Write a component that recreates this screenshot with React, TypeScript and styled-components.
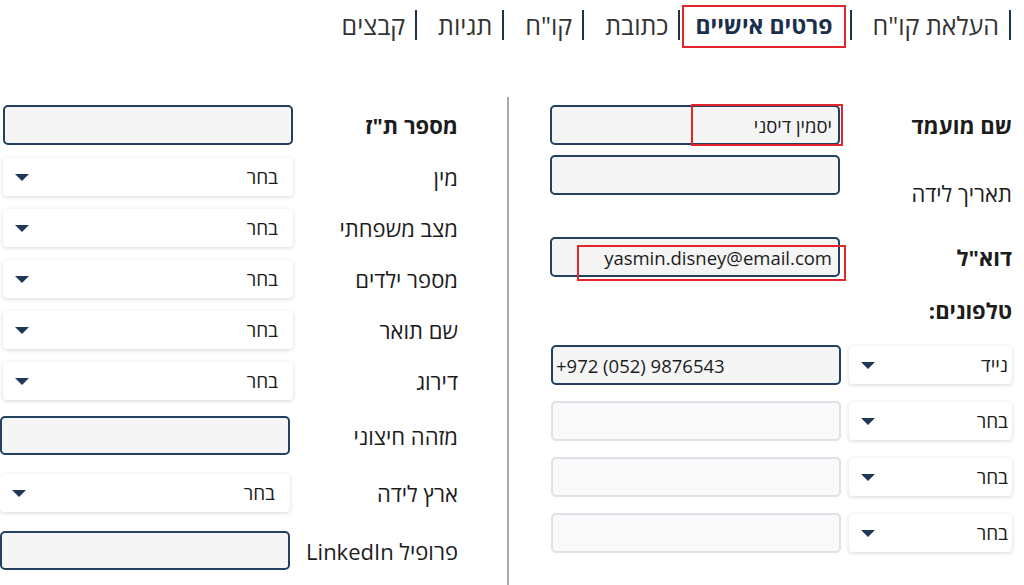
import React from "react";
import styled, { createGlobalStyle, css } from "styled-components";

const GlobalStyle = createGlobalStyle`
  html, body {
    margin: 0;
    padding: 0;
    background: #ffffff;
  }
  body {
    font-family: "Open Sans", "Noto Sans", "DejaVu Sans", sans-serif;
    color: #1c1c1c;
  }
  * {
    box-sizing: border-box;
  }
`;

const Page = styled.div`
  width: 1024px;
  height: 585px;
  overflow: hidden;
  direction: rtl;
`;

const Tabs = styled.nav`
  display: flex;
  align-items: flex-start;
  height: 97px;
  padding: 10px 13px 0 0;
`;

const Tab = styled.div<{ $active?: boolean }>`
  position: relative;
  border-right: 2px solid #1d3350;
  height: 30px;
  line-height: 30px;
  font-size: 25px;
  white-space: nowrap;
  color: #333333;
  padding-right: 10px;
  margin-left: 21px;

  ${({ $active }) =>
    $active &&
    css`
      padding-right: 17px;
      margin-left: 15px;
      font-size: 23px;
      font-weight: 700;
      color: #1b2f4d;
    `}
`;

const TabLabel = styled.span`
  position: relative;
  display: inline-block;
`;

const Mark = styled.span<{ $t: number; $r: number; $b: number; $l: number }>`
  position: absolute;
  top: ${({ $t }) => $t}px;
  right: ${({ $r }) => $r}px;
  bottom: ${({ $b }) => $b}px;
  left: ${({ $l }) => $l}px;
  border: 2.5px solid #e3262b;
  pointer-events: none;
`;

const Columns = styled.div`
  display: grid;
  grid-template-columns: 517px 507px;
  height: 488px;
`;

const Column = styled.section<{ $pr: number }>`
  display: flex;
  flex-direction: column;
  padding: 8px ${({ $pr }) => $pr}px 0 0;
`;

const RightColumn = styled(Column)`
  border-left: 2px solid #a9a9a9;
`;

const Row = styled.div<{ $mt?: number; $gap?: number; $top?: boolean }>`
  display: flex;
  align-items: ${({ $top }) => ($top ? "flex-start" : "center")};
  gap: ${({ $gap }) => $gap ?? 10}px;
  margin-top: ${({ $mt }) => $mt ?? 0}px;
`;

const Label = styled.div<{ $w: number; $bold?: boolean; $drop?: number }>`
  flex: 0 0 ${({ $w }) => $w}px;
  font-size: 22px;
  line-height: 28px;
  white-space: nowrap;
  font-weight: ${({ $bold }) => ($bold ? 700 : 400)};
  color: #1c1c1c;
  margin-top: ${({ $drop }) => $drop ?? 0}px;
`;

const Heading = styled.div<{ $mt: number }>`
  font-size: 22px;
  line-height: 28px;
  font-weight: 700;
  margin-top: ${({ $mt }) => $mt}px;
`;

const FieldWrap = styled.div`
  position: relative;
  flex: 0 0 auto;
`;

const TextInput = styled.input<{ $muted?: boolean; $ltr?: boolean; $h?: number; $shift?: boolean }>`
  display: block;
  width: 290px;
  height: ${({ $h }) => $h ?? 40}px;
  margin-right: ${({ $shift }) => ($shift ? 3 : 0)}px;
  border-radius: 5px;
  border: 2px solid ${({ $muted }) => ($muted ? "#dde2e8" : "#22405f")};
  background: ${({ $muted }) => ($muted ? "#fafafa" : "#f5f5f5")};
  font-family: inherit;
  font-size: 18.5px;
  color: #1c1c1c;
  padding: 0 ${({ $ltr }) => ($ltr ? "3px" : "6px")};
  outline: none;
  direction: ${({ $ltr }) => ($ltr ? "ltr" : "rtl")};
  text-align: ${({ $ltr }) => ($ltr ? "left" : "right")};
`;

const SelectBox = styled.div<{ $w: number; $pr: number; $shift?: boolean }>`
  display: flex;
  align-items: center;
  justify-content: space-between;
  width: ${({ $w }) => $w}px;
  height: 38px;
  margin-right: ${({ $shift }) => ($shift ? 3 : 0)}px;
  padding: 0 ${({ $pr }) => $pr}px 0 12px;
  background: #ffffff;
  border-radius: 4px;
  box-shadow: 0 1px 4px rgba(0, 0, 0, 0.16);
  font-size: 19px;
  color: #1c1c1c;
  flex: 0 0 auto;
`;

const Caret = styled.span`
  width: 0;
  height: 0;
  border-left: 7px solid transparent;
  border-right: 7px solid transparent;
  border-top: 7px solid #1f3858;
`;

interface SelectProps {
  value: string;
  w?: number;
  pr?: number;
  shift?: boolean;
}

const Select = ({ value, w = 290, pr = 15, shift }: SelectProps) => (
  <SelectBox $w={w} $pr={pr} $shift={shift}>
    <span>{value}</span>
    <Caret />
  </SelectBox>
);

const tabs = ['העלאת קו"ח', "פרטים אישיים", "כתובת", 'קו"ח', "תגיות", "קבצים"];

const leftSelects = ["מין", "מצב משפחתי", "מספר ילדים", "שם תואר", "דירוג"];

const App = () => {
  return (
    <>
      <GlobalStyle />
      <Page>
        <Tabs>
          {tabs.map((t) => (
            <Tab key={t} $active={t === "פרטים אישיים"}>
              <TabLabel>
                {t}
                {t === "פרטים אישיים" && <Mark $t={-5} $r={-13} $b={-8} $l={-13} />}
              </TabLabel>
            </Tab>
          ))}
        </Tabs>

        <Columns>
          <RightColumn $pr={12}>
            <Row>
              <Label $w={162} $bold>
                שם מועמד
              </Label>
              <FieldWrap>
                <TextInput readOnly value="יסמין דיסני" />
                <Mark $t={-1} $r={-3} $b={-1} $l={141} />
              </FieldWrap>
            </Row>
            <Row $mt={10} $top>
              <Label $w={162} $drop={24}>
                תאריך לידה
              </Label>
              <FieldWrap>
                <TextInput readOnly value="" />
              </FieldWrap>
            </Row>
            <Row $mt={30}>
              <Label $w={162} $bold>
                דוא"ל
              </Label>
              <FieldWrap>
                <TextInput readOnly value="yasmin.disney@email.com" />
                <Mark $t={8} $r={-6} $b={-4} $l={27} />
              </FieldWrap>
            </Row>
            <Heading $mt={19}>טלפונים:</Heading>
            <Row $mt={21} $gap={8}>
              <Select value="נייד" w={163} pr={4} />
              <TextInput readOnly $ltr value="+972 (052) 9876543" />
            </Row>
            {[0, 1, 2].map((i) => (
              <Row key={i} $mt={16} $gap={8}>
                <Select value="בחר" w={163} pr={4} />
                <TextInput readOnly $muted value="" />
              </Row>
            ))}
          </RightColumn>

          <Column $pr={49}>
            <Row>
              <Label $w={155} $bold>
                מספר ת"ז
              </Label>
              <TextInput readOnly value="" />
            </Row>
            {leftSelects.map((l) => (
              <Row key={l} $mt={13}>
                <Label $w={155}>{l}</Label>
                <Select value="בחר" />
              </Row>
            ))}
            <Row $mt={16}>
              <Label $w={155}>מזהה חיצוני</Label>
              <TextInput readOnly value="" $h={39} $shift />
            </Row>
            <Row $mt={19}>
              <Label $w={155}>ארץ לידה</Label>
              <Select value="בחר" shift />
            </Row>
            <Row $mt={19}>
              <Label $w={155}>פרופיל LinkedIn</Label>
              <TextInput readOnly value="" $h={39} $shift />
            </Row>
          </Column>
        </Columns>
      </Page>
    </>
  );
};

export default App;
